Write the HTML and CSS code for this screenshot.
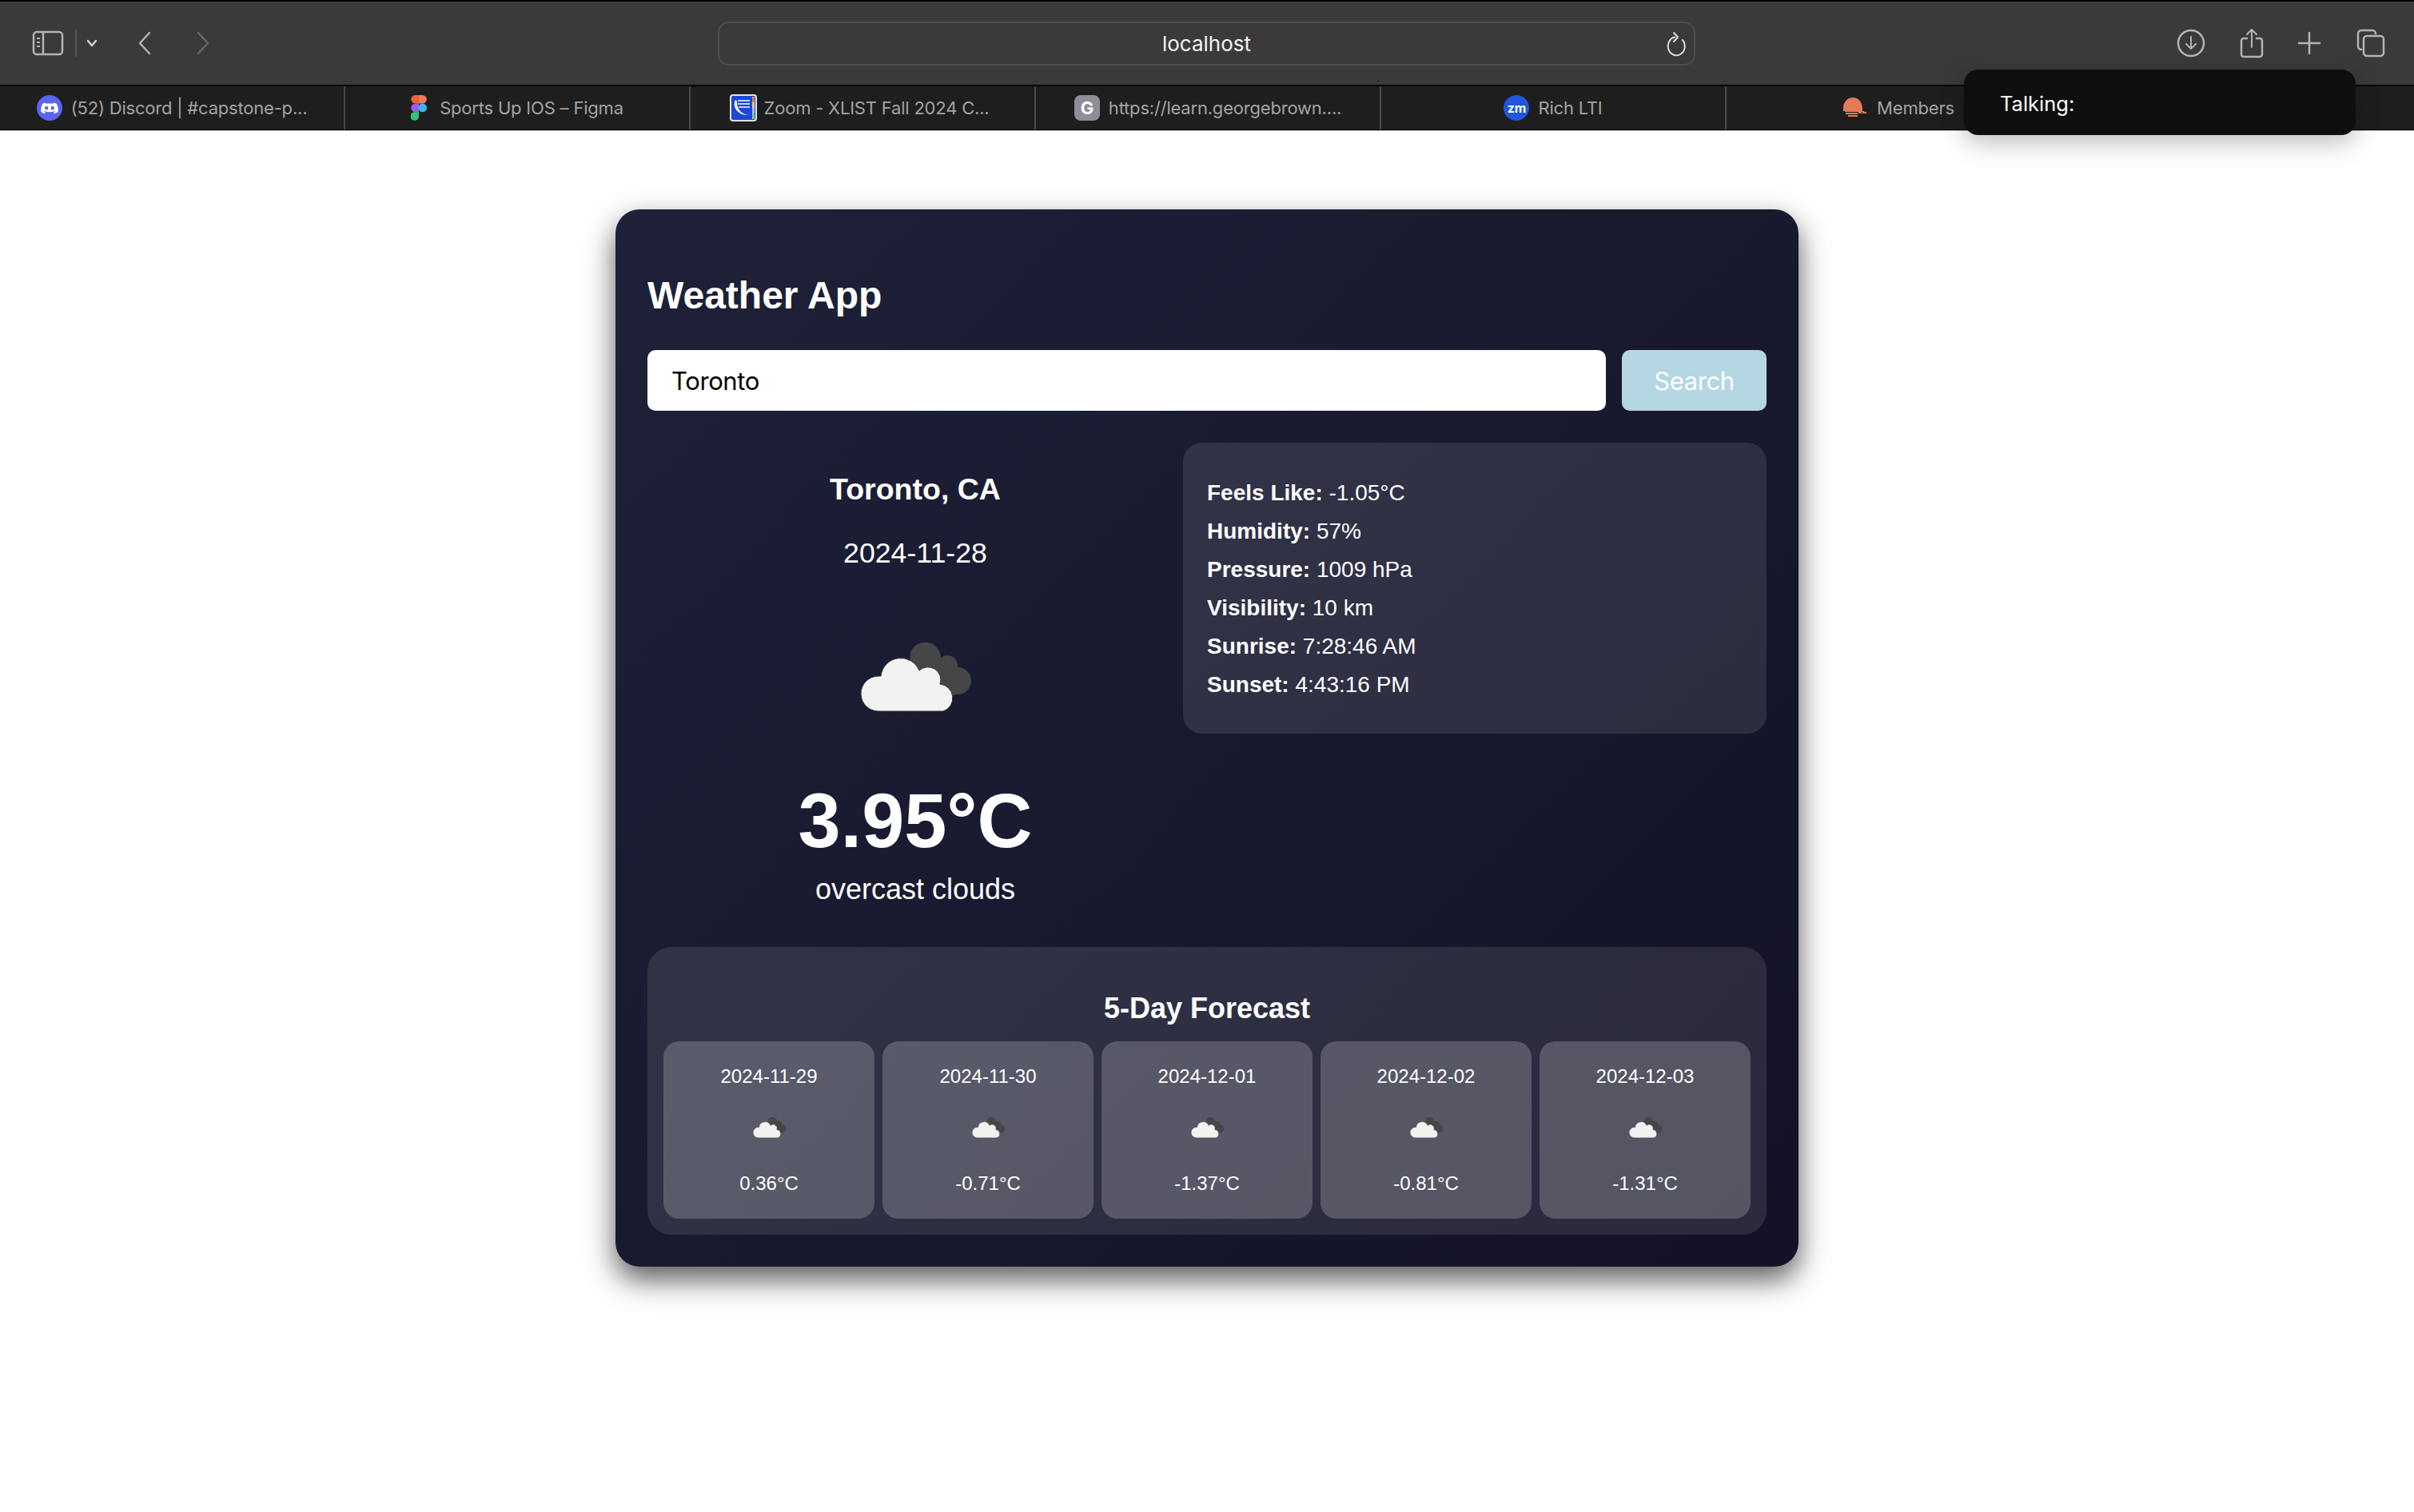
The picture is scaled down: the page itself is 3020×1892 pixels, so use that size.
FILE: index.html
```html
<!doctype html>
<html lang="en">
    <head>
        <meta charset="UTF-8">
        <meta name="viewport" content="width=device-width, initial-scale=1.0">
        <title>Weather App</title>
        <link rel="stylesheet" href="styles.css">
    </head>
    <body>
        <svg class="defs" width="0" height="0">
            <symbol id="clouds" viewBox="-4 0 144 90">
                <path fill="#464648" d="M62 13A19.5 19.5 0 0 1 100 19A13 13 0 0 1 121 31A17 17 0 0 1 121 65L90 70L60 40Z"/>
                <path fill="#f2f2f0" stroke="#2e2e34" stroke-width="1" d="M22 86A22 22 0 0 1 22 42H25A25 25 0 0 1 73 35A16 16 0 0 1 99 52A17.5 17.5 0 0 1 103 86Z"/>
            </symbol>
        </svg>

        <header class="browser">
            <div class="toolbar">
                <div class="nav">
                    <svg class="icon-sidebar" width="40" height="32" viewBox="0 0 40 32" fill="none" stroke="#b4b4b4" stroke-width="2.5">
                        <rect x="2" y="2" width="36" height="28" rx="4"/>
                        <path d="M14 2V30"/>
                        <path d="M6 10H10M6 15H10M6 20H10" stroke-width="2"/>
                    </svg>
                    <span class="nav-sep"></span>
                    <svg class="icon-menu" width="14" height="10" viewBox="0 0 14 10" fill="none" stroke="#d0d0d0" stroke-width="2.5" stroke-linecap="round" stroke-linejoin="round">
                        <path d="M2 2L7 8L12 2"/>
                    </svg>
                    <svg class="icon-back" width="18" height="30" viewBox="0 0 18 30" fill="none" stroke="#b4b4b4" stroke-width="2.5" stroke-linecap="round" stroke-linejoin="round">
                        <path d="M15 2L3 15L15 28"/>
                    </svg>
                    <svg class="icon-forward" width="18" height="30" viewBox="0 0 18 30" fill="none" stroke="#666" stroke-width="2.5" stroke-linecap="round" stroke-linejoin="round">
                        <path d="M3 2L15 15L3 28"/>
                    </svg>
                </div>
                <div class="address">
                    <span>localhost</span>
                    <svg class="icon-reload" width="26" height="32" viewBox="0 0 26 32" fill="none" stroke="#dcdcdc" stroke-width="2" stroke-linecap="round" stroke-linejoin="round">
                        <path d="M11 7.5A10.5 11.5 0 1 0 21 11"/>
                        <path d="M10 2L15 7.5L10 13"/>
                    </svg>
                </div>
                <div class="actions">
                    <svg width="36" height="36" viewBox="0 0 36 36" fill="none" stroke="#b4b4b4" stroke-width="2.5" stroke-linecap="round" stroke-linejoin="round">
                        <circle cx="18" cy="18" r="16"/>
                        <path d="M18 10V25M12 19L18 25L24 19" stroke-width="2"/>
                    </svg>
                    <svg width="30" height="40" viewBox="0 0 30 40" fill="none" stroke="#b4b4b4" stroke-width="2.5" stroke-linecap="round" stroke-linejoin="round">
                        <path d="M9 14H5A3 3 0 0 0 2 17V34A3 3 0 0 0 5 37H25A3 3 0 0 0 28 34V17A3 3 0 0 0 25 14H21"/>
                        <path d="M15 25V3M9 9L15 3L21 9" stroke-width="2"/>
                    </svg>
                    <svg width="30" height="30" viewBox="0 0 30 30" fill="none" stroke="#b4b4b4" stroke-width="2.5" stroke-linecap="round">
                        <path d="M15 2V28M2 15H28"/>
                    </svg>
                    <svg width="36" height="36" viewBox="0 0 36 36" fill="none" stroke="#b4b4b4" stroke-width="2.5" stroke-linejoin="round">
                        <path d="M7 26H6A4 4 0 0 1 2 22V6A4 4 0 0 1 6 2H20A4 4 0 0 1 24 6V7"/>
                        <rect x="9" y="9" width="25" height="25" rx="4"/>
                    </svg>
                </div>
            </div>
            <nav class="tabs">
                <div class="tab">
                    <svg class="favicon" viewBox="0 0 32 32">
                        <circle cx="16" cy="16" r="16" fill="#5865f2"/>
                        <path fill="#fff" d="M11 9.5C9.6 9.8 8.4 10.2 7.4 10.8C5.6 13.6 4.9 17 5.2 21C6.6 22.1 8.2 22.8 9.8 23.2L11 21.4C10.2 21.1 9.6 20.8 9 20.4L9.6 19.9C13.6 21.6 18.4 21.6 22.4 19.9L23 20.4C22.4 20.8 21.8 21.1 21 21.4L22.2 23.2C23.8 22.8 25.4 22.1 26.8 21C27.1 17 26.4 13.6 24.6 10.8C23.6 10.2 22.4 9.8 21 9.5L20.4 10.8C18.2 10.5 13.8 10.5 11.6 10.8Z"/>
                        <ellipse cx="12.2" cy="16.2" rx="2.1" ry="2.4" fill="#5865f2"/>
                        <ellipse cx="19.8" cy="16.2" rx="2.1" ry="2.4" fill="#5865f2"/>
                    </svg>
                    <span>(52) Discord | #capstone-p...</span>
                </div>
                <div class="tab">
                    <svg class="favicon favicon-figma" viewBox="0 0 20 32">
                        <path fill="#e8603c" d="M10 0H5.5A5.2 5.2 0 0 0 5.5 10.6H10Z"/>
                        <path fill="#f2785c" d="M10 0H14.5A5.2 5.2 0 0 1 14.5 10.6H10Z"/>
                        <path fill="#9b5de5" d="M10 10.6H5.5A5.2 5.2 0 0 0 5.5 21.2H10Z"/>
                        <circle cx="14.7" cy="15.9" r="5.3" fill="#3db4f2"/>
                        <path fill="#2fc77e" d="M5.3 21.2H10V26.7A5.3 5.3 0 1 1 5.3 21.2Z"/>
                    </svg>
                    <span>Sports Up IOS – Figma</span>
                </div>
                <div class="tab">
                    <svg class="favicon favicon-zoom" viewBox="0 0 34 34">
                        <rect width="34" height="34" rx="4" fill="#e4e4e4"/>
                        <rect x="2" y="2" width="30" height="30" rx="2" fill="#1b48d6"/>
                        <rect x="28" y="3" width="3" height="7" fill="#e8843a"/>
                        <rect x="28" y="10" width="3" height="7" fill="#e6d06a"/>
                        <rect x="28" y="17" width="3" height="7" fill="#b9b4ea"/>
                        <rect x="28" y="24" width="3" height="7" fill="#7ed36a"/>
                        <path d="M10 8H25M10 12H25M11 16H25" stroke="#c6d2f8" stroke-width="1.8"/>
                        <path d="M7 7C3 15 9 27 25 26C15 26 8 18 9 9Z" fill="#fff"/>
                    </svg>
                    <span>Zoom - XLIST Fall 2024 C...</span>
                </div>
                <div class="tab">
                    <span class="favicon badge badge-grey">G</span>
                    <span>https://learn.georgebrown....</span>
                </div>
                <div class="tab">
                    <span class="favicon badge badge-zm">zm</span>
                    <span>Rich LTI</span>
                </div>
                <div class="tab">
                    <svg class="favicon" viewBox="0 0 32 32">
                        <path fill="#e37a59" d="M13 3C20 3 25 9 25 17V20H27V21H3V20H1V16C1 9 6 3 13 3Z"/>
                        <path fill="#e37a59" d="M4 22H19V24H4ZM20 21H24V23H20ZM25 21H30V23H25ZM7 25H19V27H7Z"/>
                    </svg>
                    <span>Members</span>
                </div>
                <div class="tab"></div>
            </nav>
            <div class="talking">Talking:</div>
        </header>

        <main class="card">
            <h1>Weather App</h1>
            <form class="search">
                <input type="text" value="Toronto">
                <button type="button">Search</button>
            </form>
            <section class="now">
                <div class="current">
                    <h2>Toronto, CA</h2>
                    <p class="date">2024-11-28</p>
                    <svg class="cloud-big"><use href="#clouds"/></svg>
                    <p class="temp">3.95°C</p>
                    <p class="desc">overcast clouds</p>
                </div>
                <div class="details">
                    <p><b>Feels Like:</b> -1.05°C</p>
                    <p><b>Humidity:</b> 57%</p>
                    <p><b>Pressure:</b> 1009 hPa</p>
                    <p><b>Visibility:</b> 10 km</p>
                    <p><b>Sunrise:</b> 7:28:46 AM</p>
                    <p><b>Sunset:</b> 4:43:16 PM</p>
                </div>
            </section>
            <section class="forecast">
                <h3>5-Day Forecast</h3>
                <div class="days">
                    <div class="day">
                        <p>2024-11-29</p>
                        <svg class="cloud-small"><use href="#clouds"/></svg>
                        <p>0.36°C</p>
                    </div>
                    <div class="day">
                        <p>2024-11-30</p>
                        <svg class="cloud-small"><use href="#clouds"/></svg>
                        <p>-0.71°C</p>
                    </div>
                    <div class="day">
                        <p>2024-12-01</p>
                        <svg class="cloud-small"><use href="#clouds"/></svg>
                        <p>-1.37°C</p>
                    </div>
                    <div class="day">
                        <p>2024-12-02</p>
                        <svg class="cloud-small"><use href="#clouds"/></svg>
                        <p>-0.81°C</p>
                    </div>
                    <div class="day">
                        <p>2024-12-03</p>
                        <svg class="cloud-small"><use href="#clouds"/></svg>
                        <p>-1.31°C</p>
                    </div>
                </div>
            </section>
        </main>
    </body>
</html>
```

FILE: styles.css
```css
body {
    margin: 0;
    min-height: 100vh;
    background: #fff;
    font-family: "Liberation Sans", Arial, sans-serif;
    color: #fff;
}
p, h1, h2, h3 {
    margin: 0;
}
.defs {
    display: block;
}

/* browser chrome */
.browser {
    position: relative;
    font-family: Inter, "Noto Sans", sans-serif;
}
.toolbar {
    height: 104px;
    border-top: 2px solid #000;
    border-bottom: 2px solid #000;
    background: #3a3a3a;
    display: grid;
    grid-template-columns: 898px 1223px 1fr;
    align-items: center;
}
.nav {
    display: flex;
    align-items: center;
    padding-left: 40px;
}
.nav-sep {
    width: 2px;
    height: 34px;
    margin: 0 12px 0 14px;
    background: #555;
}
.icon-back {
    margin-left: 50px;
}
.icon-forward {
    margin-left: 55px;
}
.address {
    height: 55px;
    box-sizing: border-box;
    border: 2px solid #4e4e4e;
    border-radius: 14px;
    display: flex;
    align-items: center;
    justify-content: center;
    position: relative;
    font-size: 26px;
    color: #f4f4f4;
}
.icon-reload {
    position: absolute;
    right: 9px;
    top: 10px;
}
.actions {
    display: flex;
    align-items: center;
    padding-left: 602px;
}
.actions svg:nth-child(2) {
    margin-left: 43px;
}
.actions svg:nth-child(3) {
    margin-left: 42px;
}
.actions svg:nth-child(4) {
    margin-left: 44px;
}
.tabs {
    height: 54px;
    background: #1e1e1e;
    border-bottom: 1px solid #000;
    box-shadow: 0 1px 0 #c8c8c8;
    display: grid;
    grid-template-columns: repeat(7, 432px);
    overflow: hidden;
    position: relative;
}
.tab {
    box-sizing: border-box;
    border-right: 2px solid #4a4a4a;
    display: flex;
    align-items: center;
    justify-content: center;
    gap: 11px;
    font-size: 22px;
    letter-spacing: -.2px;
    color: #a4a4a4;
    white-space: nowrap;
}
.favicon {
    width: 32px;
    height: 32px;
    flex: none;
}
.favicon-figma {
    width: 20px;
    margin-right: 5px;
}
.favicon-zoom {
    width: 34px;
    height: 34px;
    margin: 0 -2px 0 -8px;
}
.badge {
    border-radius: 8px;
    display: flex;
    align-items: center;
    justify-content: center;
    font-weight: 700;
    color: #fff;
}
.badge-grey {
    background: #8e8e98;
    font-size: 22px;
}
.badge-zm {
    background: #2057e0;
    border-radius: 50%;
    font-size: 16px;
}
.talking {
    position: absolute;
    left: 2457px;
    top: 87px;
    width: 490px;
    height: 82px;
    box-sizing: border-box;
    padding: 3px 45px 0;
    display: flex;
    align-items: center;
    background: #0e0e0e;
    border-radius: 18px;
    box-shadow: 0 10px 30px rgba(0, 0, 0, .25);
    color: #fff;
    font-size: 25.5px;
}

/* weather card */
.card {
    box-sizing: border-box;
    width: 1480px;
    height: 1323px;
    margin: 99px auto 0;
    padding: 78px 40px 40px;
    border-radius: 30px;
    background: linear-gradient(135deg, #1e2139, #131226);
    box-shadow: 0 16px 36px rgba(0, 0, 0, .65);
}
h1 {
    font-size: 48px;
    margin-bottom: 41px;
    padding-top: 2px;
}
.search {
    display: flex;
    gap: 20px;
}
.search input {
    flex: 1;
    height: 76px;
    box-sizing: border-box;
    padding: 0 30px;
    border: 0;
    border-radius: 10px;
    background: #fff;
    color: #000;
    font: 31px Inter, sans-serif;
    letter-spacing: -.4px;
}
.search button {
    width: 181px;
    height: 76px;
    border: 0;
    border-radius: 10px;
    background: #b5d6e3;
    color: #fff;
    font: 31px Inter, sans-serif;
    letter-spacing: -.4px;
}
.now {
    display: grid;
    grid-template-columns: 670px 730px;
    align-items: start;
    margin-top: 40px;
}
.current {
    display: flex;
    flex-direction: column;
    align-items: center;
    padding-top: 37px;
}
h2 {
    font-size: 37.5px;
}
.date {
    font-size: 35.7px;
    margin-top: 38px;
}
.cloud-big {
    width: 144px;
    height: 90px;
    margin-top: 91px;
}
.temp {
    font-size: 95.5px;
    font-weight: 700;
    margin-top: 79px;
}
.desc {
    font-size: 36px;
    margin-top: 10px;
}
.details {
    padding: 39px 30px 37px;
    border-radius: 24px;
    background: rgba(255, 255, 255, .1);
    font-size: 28px;
    line-height: 48px;
}
.forecast {
    margin-top: 51px;
    padding: 56px 20px 20px;
    border-radius: 30px;
    background: rgba(255, 255, 255, .1);
}
h3 {
    font-size: 36px;
    text-align: center;
}
.days {
    display: grid;
    grid-template-columns: repeat(5, 1fr);
    gap: 10px;
    margin-top: 20px;
}
.day {
    height: 222px;
    box-sizing: border-box;
    padding-top: 30px;
    border-radius: 20px;
    background: rgba(255, 255, 255, .2);
    display: flex;
    flex-direction: column;
    align-items: center;
    font-size: 24px;
}
.cloud-small {
    width: 43px;
    height: 27px;
    margin: 37px 0 42px;
}
```
